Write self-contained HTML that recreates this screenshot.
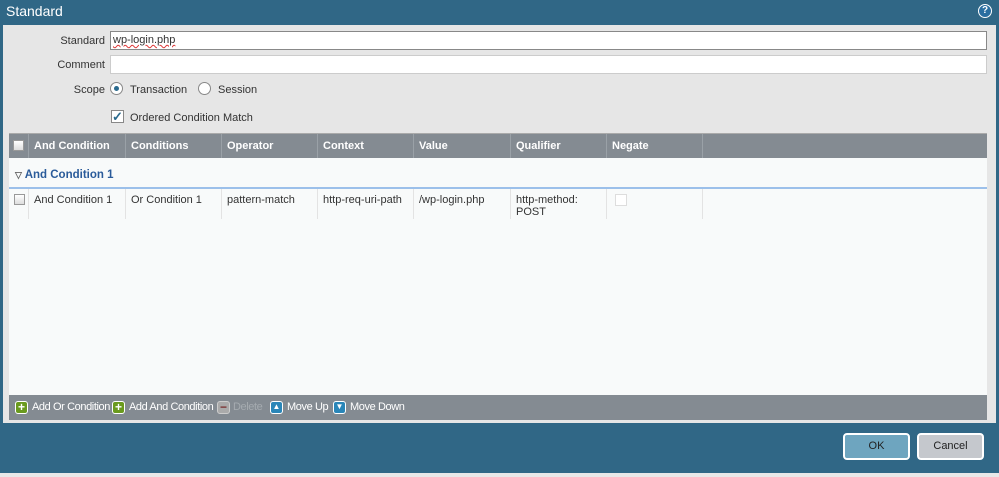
<!DOCTYPE html>
<html><head><style>
*{box-sizing:border-box;margin:0;padding:0}
body{width:999px;height:477px;background:#306786;font-family:"Liberation Sans",sans-serif;font-size:11px;color:#333;position:relative;overflow:hidden}
.abs{position:absolute;white-space:nowrap}
.title{left:6px;top:3px;color:#fff;font-family:"Liberation Sans",sans-serif;font-size:14px}
.help{left:978px;top:4px;width:14px;height:14px;border-radius:50%;background:#2a6ea0;border:1.5px solid #fff;color:#fff;font-size:10px;font-weight:bold;text-align:center;line-height:11px}
.panel{left:3px;top:25px;width:993px;height:398px;background:#e6e6e6}
.lbl{font-size:11px;color:#333;text-align:right;width:100px}
.inp{background:#fff;border:1px solid #aaa;height:19px}
.hdr{left:9px;top:133px;width:978px;height:25px;background:#848b92;border-top:1px solid #aaa}
.hdr div{position:absolute;top:0;height:24px;line-height:24px;color:#fff;font-weight:bold;padding-left:5px;border-left:1px solid #9aa1a7}
.body{left:9px;top:158px;width:978px;height:237px;background:#f8fafa}
.row div{position:absolute;top:189px;height:30px;padding:5px 0 0 5px;border-left:1px solid #e3e3e3;color:#333;white-space:nowrap}
.cb{width:11px;height:11px;border:1px solid #999;background:linear-gradient(#fff,#ddd)}
.tb{left:9px;top:395px;width:978px;height:25px;background:#848b92;color:#fff;font-family:"Liberation Sans",sans-serif;font-size:11px;letter-spacing:-.4px}
.tb span{position:absolute;top:6px}
.ic{position:absolute;top:6px;width:13px;height:13px;border-radius:3px;border:1px solid #fff;background:#fff;color:#fff;font-size:12px;line-height:10px;text-align:center;font-weight:bold;letter-spacing:0}
.btn{top:433px;height:27px;border:2px solid #fff;border-radius:4px;text-align:center;line-height:23px;font-size:11px;color:#222}
</style></head><body>
<div class="abs title">Standard</div>
<div class="abs help">?</div>
<div class="abs panel"></div>
<div class="abs lbl" style="left:5px;top:35px">Standard</div>
<div class="abs inp" style="left:110px;top:31px;width:877px;border-color:#888"><span style="position:absolute;left:2px;top:2px;text-decoration:underline wavy #d33;text-decoration-thickness:1px">wp-login.php</span></div>
<div class="abs lbl" style="left:5px;top:59px">Comment</div>
<div class="abs inp" style="left:110px;top:55px;width:877px;border-color:#ccc"></div>
<div class="abs lbl" style="left:5px;top:84px">Scope</div>
<div class="abs" style="left:110px;top:82px;width:13px;height:13px;border-radius:50%;border:1px solid #888;background:#fff"><div style="position:absolute;left:3px;top:3px;width:5px;height:5px;border-radius:50%;background:#2a6a8e"></div></div>
<div class="abs" style="left:130px;top:84px">Transaction</div>
<div class="abs" style="left:198px;top:82px;width:13px;height:13px;border-radius:50%;border:1px solid #888;background:#fff"></div>
<div class="abs" style="left:218px;top:84px">Session</div>
<div class="abs" style="left:111px;top:110px;width:13px;height:13px;border:1px solid #888;background:#fff;color:#2a6a8e;font-size:13px;line-height:11px;text-align:center;font-weight:bold">✓</div>
<div class="abs" style="left:130px;top:112px">Ordered Condition Match</div>
<div class="abs hdr">
<div style="left:0;width:19px;border:none"><span class="cb" style="position:absolute;left:4px;top:6px"></span></div>
<div style="left:19px;width:97px">And Condition</div>
<div style="left:116px;width:96px">Conditions</div>
<div style="left:212px;width:96px">Operator</div>
<div style="left:308px;width:96px">Context</div>
<div style="left:404px;width:97px">Value</div>
<div style="left:501px;width:96px">Qualifier</div>
<div style="left:597px;width:96px">Negate</div>
<div style="left:693px;width:285px"></div>
</div>
<div class="abs body"></div>
<div class="abs" style="left:15px;top:169px;color:#2a5b9a;font-weight:bold;font-size:11.5px"><span style="color:#666;font-size:9px">▽</span> And Condition 1</div>
<div class="abs" style="left:9px;top:187px;width:978px;height:2px;background:#9cc0ea"></div>
<div class="row">
<div style="left:9px;width:19px;border:none"><span class="cb" style="display:block"></span></div>
<div style="left:28px;width:97px">And Condition 1</div>
<div style="left:125px;width:96px">Or Condition 1</div>
<div style="left:221px;width:96px">pattern-match</div>
<div style="left:317px;width:96px">http-req-uri-path</div>
<div style="left:413px;width:97px">/wp-login.php</div>
<div style="left:510px;width:96px;line-height:12px">http-method:<br>POST</div>
<div style="left:606px;width:96px"><span style="display:block;width:12px;height:12px;border:1px solid #ddd;background:#fff;margin-left:3px"></span></div>
<div style="left:702px;width:1px"></div>
</div>
<div class="abs tb">
<div class="ic" style="left:6px;background:#6a9a1e">+</div><span style="left:23px">Add Or Condition</span>
<div class="ic" style="left:103px;background:#6a9a1e">+</div><span style="left:120px">Add And Condition</span>
<div class="ic" style="left:208px;background:#aaa;border-color:#ccc;color:#7a3030">−</div><span style="left:224px;color:#a5abb0">Delete</span>
<div class="ic" style="left:261px;background:#2a86b8;font-size:8px">▲</div><span style="left:278px">Move Up</span>
<div class="ic" style="left:324px;background:#2a86b8;font-size:8px">▼</div><span style="left:341px">Move Down</span>
</div>
<div class="abs btn" style="left:843px;width:67px;background:#6ea5bf">OK</div>
<div class="abs btn" style="left:917px;width:67px;background:#c5c8cd">Cancel</div>
<div class="abs" style="left:0;top:473px;width:999px;height:4px;background:#e8e8e8"></div>
</body></html>
